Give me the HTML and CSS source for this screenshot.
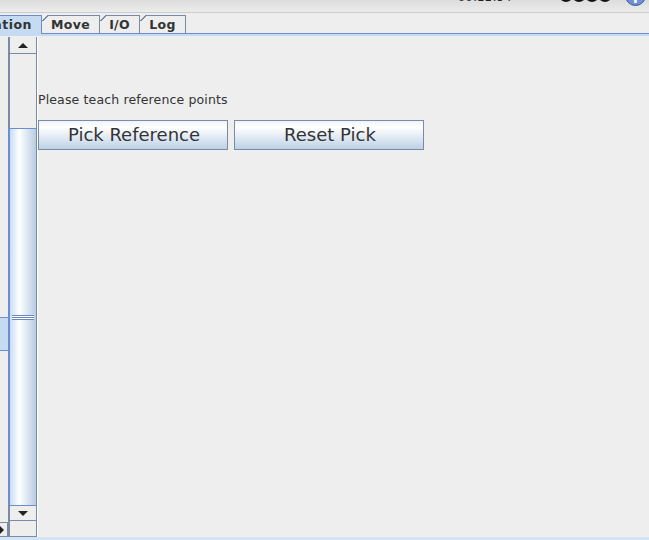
FILE: index.html
```html
<!DOCTYPE html>
<html lang="en">
<head>
    <meta charset="UTF-8">
    <title>Pick Reference</title>
    <link rel="stylesheet" href="styles.css">
</head>
<body>
    <div class="app">
        <div class="top-bar">
            <span class="clock">00:22:54</span>
            <span class="dots"><i></i><i></i><i></i><i></i></span>
            <span class="info-icon">i</span>
        </div>

        <div class="tabs">
            <div class="tab tab-active"><span>ation</span></div>
            <div class="tab tab-move">Move</div>
            <div class="tab tab-io">I/O</div>
            <div class="tab tab-log">Log</div>
        </div>

        <div class="main">
            <div class="list">
                <div class="list-rows">
                    <div class="list-selected"></div>
                </div>
                <div class="hscroll">
                    <span class="arrow-right"></span>
                </div>
            </div>

            <div class="vscroll">
                <div class="scroll-btn"><span class="arrow-up"></span></div>
                <div class="scroll-track"></div>
                <div class="scroll-thumb"><span class="grip"></span></div>
                <div class="scroll-btn scroll-btn-down"><span class="arrow-down"></span></div>
                <div class="scroll-corner"></div>
            </div>

            <div class="content">
                <div class="message">Please teach reference points</div>
                <div class="buttons">
                    <button class="btn">Pick Reference</button>
                    <button class="btn">Reset Pick</button>
                </div>
            </div>
        </div>
    </div>
</body>
</html>
```

FILE: styles.css
```css
:root {
    --bg: #eeeeee;
    --border: #7a8ca5;
    --blue-line: #6a8fd0;
    --blue-light: #c5dbf2;
    --text: #333333;
}

* {
    margin: 0;
    padding: 0;
    box-sizing: border-box;
    font-family: "DejaVu Sans", sans-serif;
}

html, body {
    width: 649px;
    height: 540px;
    overflow: hidden;
    background-color: var(--bg);
}

.app {
    display: flex;
    flex-direction: column;
    height: 540px;
}

/* top status bar, mostly cut off by the window */
.top-bar {
    display: flex;
    align-items: flex-end;
    height: 13px;
    flex-shrink: 0;
    overflow: hidden;
    padding: 0 0 10px 458px;
    background: linear-gradient(#dcdcdc, #ececec);
    border-bottom: 1px solid #cccccc;
}

.clock {
    flex-shrink: 0;
    width: 102px;
    margin-bottom: -3px;
    font-size: 11px;
    line-height: 14px;
    letter-spacing: 0.6px;
    color: #222222;
}

.dots {
    display: flex;
    flex-shrink: 0;
    gap: 1px;
    width: 65px;
}

.dots i {
    display: block;
    flex-shrink: 0;
    width: 12px;
    height: 10px;
    border-radius: 50%;
    border: 3px solid #111111;
}

.info-icon {
    flex-shrink: 0;
    width: 21px;
    height: 21px;
    margin-bottom: -4px;
    border: 1px solid #3a5a9a;
    border-radius: 50%;
    background-color: #6f8fd8;
    color: #ffffff;
    font-size: 14px;
    font-weight: bold;
    line-height: 25px;
    text-align: center;
}

.tabs {
    display: flex;
    align-items: flex-start;
    height: 21px;
    flex-shrink: 0;
    padding-top: 2px;
    border-bottom: 1px solid var(--blue-line);
}

.tab {
    position: relative;
    height: 18px;
    border: 1px solid var(--border);
    border-bottom: 0;
    border-left: 0;
    font-size: 12.5px;
    font-weight: bold;
    line-height: 17px;
    color: var(--text);
    text-align: center;
    letter-spacing: 0.3px;
}

.tab-active {
    display: flex;
    justify-content: flex-end;
    overflow: hidden;
    width: 42px;
    height: 19px;
    padding-right: 9px;
    background-color: var(--blue-light);
    border-color: var(--blue-line);
    letter-spacing: 0.5px;
}

.tab-move { width: 58px; }
.tab-io { width: 40px; }
.tab-log { width: 46px; }

/* cut corner on the inactive tabs */
.tab-move::before,
.tab-io::before,
.tab-log::before {
    content: "";
    position: absolute;
    top: -1px;
    left: 0;
    width: 6px;
    height: 6px;
    background: linear-gradient(135deg, var(--bg) 48%, var(--border) 48%, var(--border) 62%, transparent 62%);
}

.main {
    display: flex;
    flex: 1;
    min-height: 0;
    border-top: 2px solid var(--blue-light);
    border-bottom: 3px solid #d5e4f5;
}

.list {
    display: flex;
    flex-direction: column;
    width: 8px;
    flex-shrink: 0;
}

.list-rows {
    flex: 1;
    padding-top: 281px;
}

.list-selected {
    height: 34px;
    background-color: var(--blue-light);
    border-top: 1px solid var(--blue-line);
    border-bottom: 1px solid var(--blue-line);
}

.hscroll {
    display: flex;
    align-items: center;
    height: 15px;
    border-top: 1px solid var(--border);
    border-right: 1px solid var(--border);
    border-bottom: 1px solid var(--border);
}

.arrow-right {
    width: 0;
    height: 0;
    border-top: 4px solid transparent;
    border-bottom: 4px solid transparent;
    border-left: 4px solid #222222;
}

.vscroll {
    display: flex;
    flex-direction: column;
    width: 29px;
    flex-shrink: 0;
    margin-top: 1px;
    border-left: 2px solid var(--border);
    border-right: 1px solid var(--border);
}

.scroll-btn {
    display: flex;
    align-items: center;
    justify-content: center;
    height: 17px;
    border-bottom: 1px solid var(--border);
}

.scroll-btn-down {
    height: 16px;
    border-top: 1px solid var(--blue-line);
}

.arrow-up,
.arrow-down {
    width: 0;
    height: 0;
    border-left: 5px solid transparent;
    border-right: 5px solid transparent;
}

.arrow-up { border-bottom: 5px solid #222222; }
.arrow-down { border-top: 5px solid #222222; }

.scroll-track {
    height: 74px;
}

.scroll-thumb {
    display: flex;
    align-items: flex-start;
    justify-content: center;
    flex: 1;
    padding-top: 186px;
    border-top: 1px solid var(--blue-line);
    box-shadow: -2px 0 0 var(--blue-line);
    background: linear-gradient(90deg, #c8dcf5, #ffffff 35%, #b8cde2);
}

.grip {
    width: 22px;
    height: 5px;
    background: repeating-linear-gradient(#6a85c0 0, #6a85c0 1px, #ffffff 1px, #ffffff 2px);
}

.scroll-corner {
    height: 16px;
    border-bottom: 1px solid var(--border);
}

.content {
    flex: 1;
    padding-top: 56px;
    border-left: 1px solid #ffffff;
}

.message {
    font-size: 12.5px;
    line-height: 16px;
    letter-spacing: 0.14px;
    color: var(--text);
}

.buttons {
    display: flex;
    gap: 6px;
    margin-top: 12px;
}

.btn {
    width: 190px;
    height: 30px;
    padding: 0 0 2px 2px;
    border: 1px solid var(--border);
    background: linear-gradient(#eef4fb, #ffffff 22%, #bdd1e6);
    font-size: 18px;
    color: var(--text);
}
```
